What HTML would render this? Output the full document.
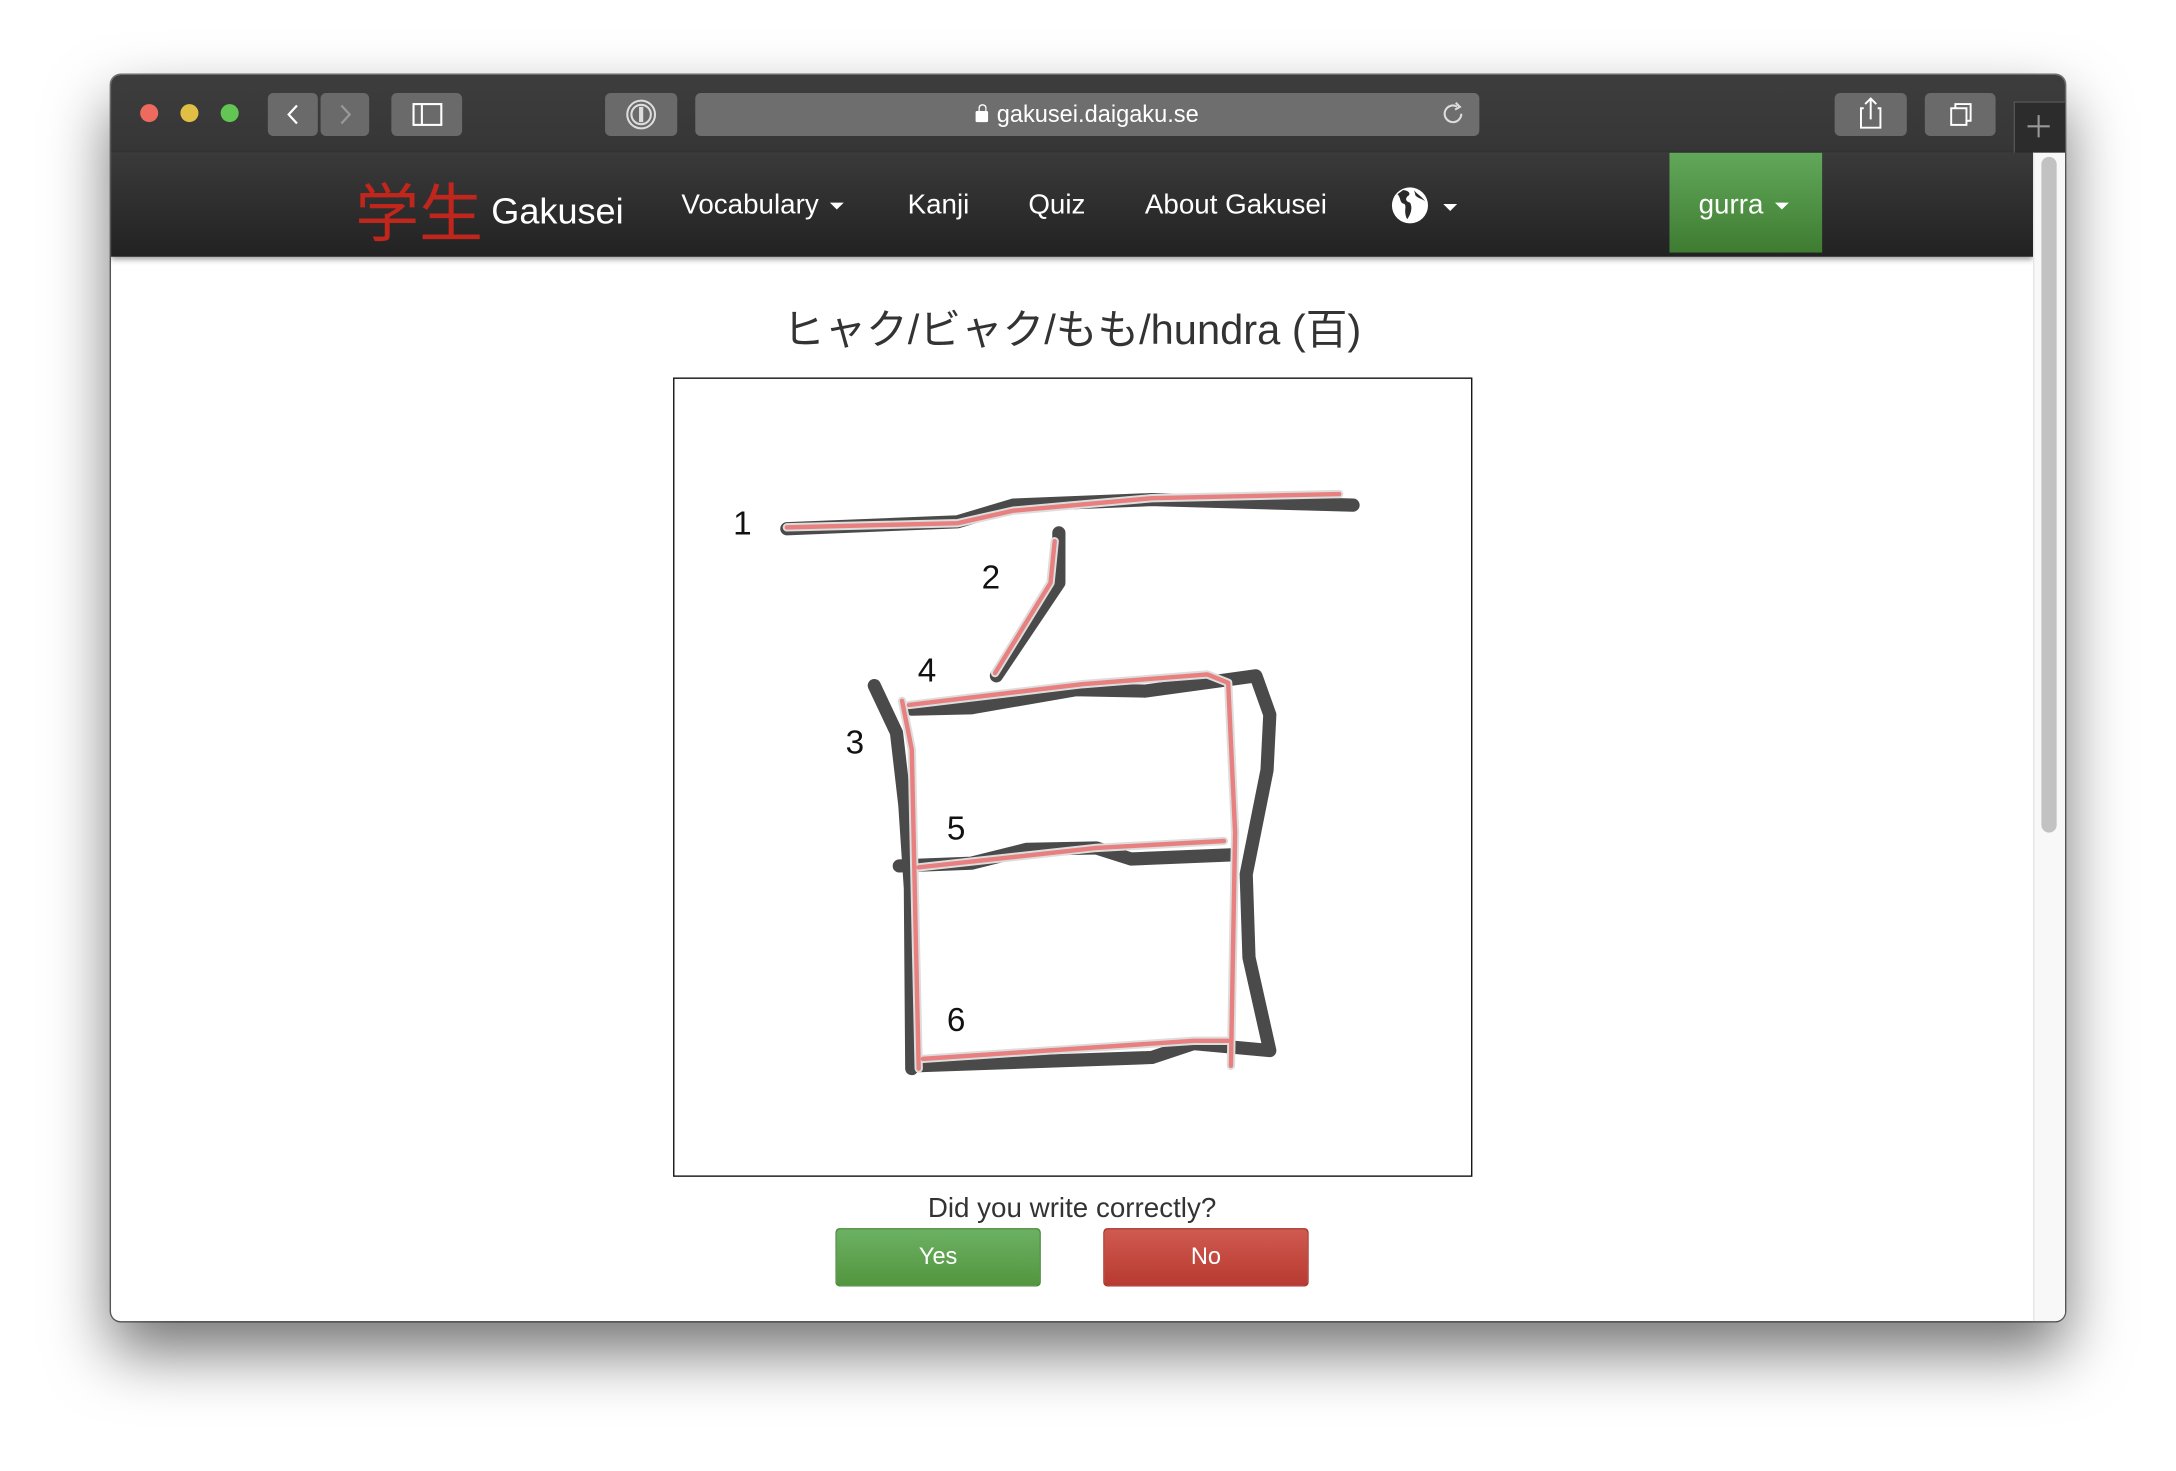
<!DOCTYPE html>
<html><head><meta charset="utf-8"><style>
html,body{margin:0;padding:0;background:#fff;width:2176px;height:1470px;overflow:hidden}
#s{position:absolute;left:0;top:0;width:1568px;height:1060px;transform:scale(1.38776);transform-origin:0 0;font-family:"Liberation Sans","Noto Sans CJK JP",sans-serif}
.a{position:absolute}
#win{left:80px;top:54px;width:1408px;height:898px;border-radius:7px;background:#fff;box-shadow:0 22px 45px rgba(0,0,0,.55),0 0 0 1px rgba(0,0,0,.55);overflow:hidden}
#tb{left:0;top:0;width:1408px;height:55px;background:linear-gradient(#3d3d3d,#363636);border-bottom:1px solid #111}
.dot{width:13px;height:13px;border-radius:50%;top:21px}
.btn{background:#6a6a6a;border-radius:4px;top:13px;height:31px}
#nav{left:0;top:56px;width:1385px;height:75px;background:linear-gradient(#3a3a3a,#222);box-shadow:0 2px 4px rgba(0,0,0,.4)}
.ni{color:#fff;font-size:20px;top:27px}
.car{display:inline-block;width:0;height:0;border-left:5px solid transparent;border-right:5px solid transparent;border-top:5px solid #fff;vertical-align:middle;margin-left:8px}
</style></head><body><div id="s">
<div id="win" class="a">
 <div id="tb" class="a">
  <div class="a dot" style="left:21px;background:#ed6a5e"></div>
  <div class="a dot" style="left:50px;background:#e1bf45"></div>
  <div class="a dot" style="left:79px;background:#62c554"></div>
  <div class="a btn" style="left:113px;width:36px"></div>
  <div class="a btn" style="left:151px;width:35px"></div>
  <svg class="a" style="left:113px;top:13px" width="73" height="31"><path d="M21,9 L15,15.5 L21,22" stroke="#fff" stroke-width="1.6" fill="none"/><path d="M53,9 L59,15.5 L53,22" stroke="#999" stroke-width="1.6" fill="none"/></svg>
  <div class="a btn" style="left:202px;width:51px"></div>
  <svg class="a" style="left:202px;top:13px" width="51" height="31"><rect x="16" y="8" width="20" height="15" stroke="#fff" stroke-width="1.5" fill="none"/><line x1="22" y1="8" x2="22" y2="23" stroke="#fff" stroke-width="1.5"/></svg>
  <div class="a btn" style="left:356px;width:52px"></div>
  <svg class="a" style="left:356px;top:13px" width="52" height="31"><circle cx="26" cy="15.5" r="10" stroke="#ddd" stroke-width="1.5" fill="none"/><circle cx="26" cy="15.5" r="7" stroke="#ddd" stroke-width="1.5" fill="none"/><rect x="24.5" y="10" width="3" height="11" fill="#ddd"/></svg>
  <div class="a btn" style="left:421px;width:565px;background:#6e6e6e"></div>
  <div class="a" style="left:421px;width:565px;top:19px;text-align:center;color:#fff;font-size:17px"><span style="display:inline-block;width:9px;height:8px;background:#fff;border-radius:1px;margin-right:6px;position:relative"><span style="position:absolute;left:1.5px;top:-5px;width:4px;height:5px;border:1.5px solid #fff;border-bottom:none;border-radius:4px 4px 0 0"></span></span>gakusei.daigaku.se</div>
  <svg class="a" style="left:958px;top:18px" width="20" height="20"><path d="M15,10 A6,6 0 1 1 12,4.8" stroke="#ddd" stroke-width="1.5" fill="none"/><path d="M11,2 L14,5 L10.5,7" stroke="#ddd" stroke-width="1.5" fill="none"/></svg>
  <div class="a btn" style="left:1242px;width:52px"></div>
  <svg class="a" style="left:1242px;top:13px" width="52" height="31"><path d="M21,11 H19 V25 H33 V11 H31" stroke="#fff" stroke-width="1.4" fill="none"/><path d="M26,19 V4 M22,8 L26,4 L30,8" stroke="#fff" stroke-width="1.4" fill="none"/></svg>
  <div class="a btn" style="left:1307px;width:51px"></div>
  <svg class="a" style="left:1307px;top:13px" width="51" height="31"><rect x="19" y="11" width="11" height="12" stroke="#fff" stroke-width="1.4" fill="none"/><path d="M22,11 V8 H33 V20 H30" stroke="#fff" stroke-width="1.4" fill="none"/></svg>
  <div class="a" style="left:1371px;top:19px;width:40px;height:37px;background:#2c2c2c;border-left:1px solid #555;border-top:1px solid #555"></div>
  <svg class="a" style="left:1371px;top:19px" width="37" height="37"><path d="M18,10 V26 M10,18 H26" stroke="#999" stroke-width="1.5"/></svg>
 </div>
 <div id="nav" class="a">
  <div class="a" style="left:176px;top:16px;color:#c0261c;font-size:46px;line-height:50px;font-family:'Noto Sans CJK JP',sans-serif">学生</div>
  <div class="a" style="left:274px;top:27px;color:#fff;font-size:26px">Gakusei</div>
  <div class="a ni" style="left:411px">Vocabulary<span class="car"></span></div>
  <div class="a ni" style="left:574px">Kanji</div>
  <div class="a ni" style="left:661px">Quiz</div>
  <div class="a ni" style="left:745px">About Gakusei</div>
  <svg class="a" style="left:922px;top:24px" width="30" height="30"><circle cx="14" cy="14" r="13" fill="#fff"/><path d="M5,6 C8,9 6,12 10,13 C12,15 9,18 12,24 C15,20 16,15 14,12 C10,11 11,8 13,7 C15,5 12,3 9,3 Z M17,3 C19,6 22,7 25,11 C22,9 20,9 18,7Z" fill="#2a2a2a"/></svg>
  <span class="a car" style="left:960px;top:37px;margin:0"></span>
  <div class="a" style="left:1123px;top:0;width:110px;height:72px;background:linear-gradient(#62a85a,#3e7c31)"></div>
  <div class="a ni" style="left:1144px">gurra<span class="car"></span></div>
 </div>
 <div class="a" style="left:1385px;top:56px;width:23px;height:842px;background:#f8f8f8;border-left:1px solid #e5e5e5"></div>
 <div class="a" style="left:1391px;top:59px;width:11px;height:487px;background:#c2c2c2;border-radius:6px"></div>
 <div class="a" style="left:0;top:159px;width:1385px;text-align:center;font-size:30px;color:#333">ヒャク/ビャク/もも/hundra (百)</div>
 <div class="a" style="left:405px;top:218px;width:574px;height:574px;border:1.5px solid #111"></div>
 <div class="a" style="left:0;top:806px;width:1385px;text-align:center;font-size:20px;color:#333">Did you write correctly?</div>
 <div class="a" style="left:522px;top:831px;width:148px;height:42px;border-radius:3px;background:linear-gradient(#6cb163,#53963f);border:1px solid #4a8a3a;box-sizing:border-box;color:#fff;font-size:17px;text-align:center;line-height:40px">Yes</div>
 <div class="a" style="left:715px;top:831px;width:148px;height:42px;border-radius:3px;background:linear-gradient(#d05a50,#b83a30);border:1px solid #a83228;box-sizing:border-box;color:#fff;font-size:17px;text-align:center;line-height:40px">No</div>
</div>
<svg class="a" style="left:0;top:0" width="1568" height="1060">
<g fill="none" stroke="#4a4a4a" stroke-width="9.5" stroke-linecap="round" stroke-linejoin="round">
<path d="M567,381 L690,376 L730,364 L830,360 L975,364"/>
<path d="M763,384 L763,420 L718,487"/>
<path d="M630,494 L646,528 L652,580 L656,640 L657,770"/>
<path d="M657,511 L700,510 L775,497 L825,498 L905,487 L915,515 L913,555 L898,630 L900,690 L915,757 L860,752 L830,762 L660,768"/>
<path d="M648,624 L700,622 L740,612 L790,611 L815,619 L887,616"/>
</g>
<g fill="none" stroke="#ddd" stroke-width="6" stroke-linecap="round" stroke-linejoin="round">
<path d="M567,380 L690,377 L730,368 L830,359 L965,356"/>
<path d="M760,390 L757,420 L717,485"/>
<path d="M650,505 L657,540 L660,680 L662,770"/>
<path d="M655,508 L780,493 L870,486 L885,492 L890,600 L887,768"/>
<path d="M662,625 L790,611 L882,606"/>
<path d="M665,763 L860,750 L885,750"/>
</g>
<g fill="none" stroke="#e88080" stroke-width="3.2" stroke-linecap="round" stroke-linejoin="round">
<path d="M567,380 L690,377 L730,368 L830,359 L965,356"/>
<path d="M760,390 L757,420 L717,485"/>
<path d="M650,505 L657,540 L660,680 L662,770"/>
<path d="M655,508 L780,493 L870,486 L885,492 L890,600 L887,768"/>
<path d="M662,625 L790,611 L882,606"/>
<path d="M665,763 L860,750 L885,750"/>
</g>
<g font-family="Liberation Sans, sans-serif" font-size="24" fill="#111" text-anchor="middle">
<text x="535" y="385">1</text><text x="714" y="424">2</text><text x="616" y="543">3</text><text x="668" y="491">4</text><text x="689" y="605">5</text><text x="689" y="743">6</text>
</g>
</svg>
</div></body></html>
